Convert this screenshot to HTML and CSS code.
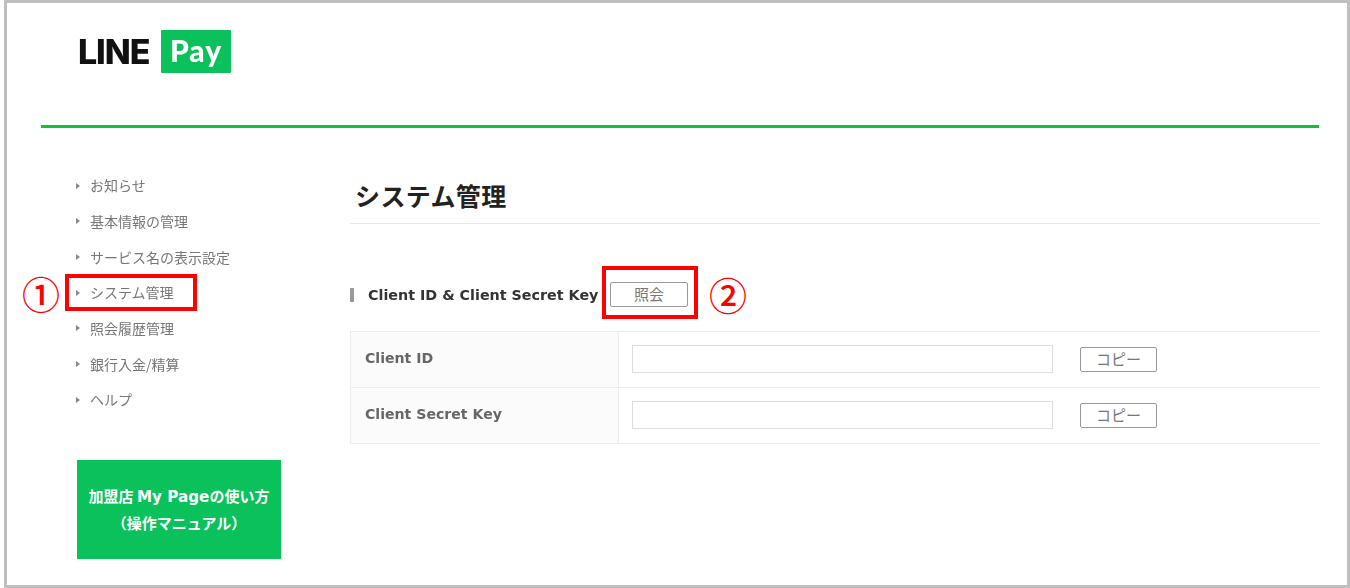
FILE: index.html
```html
<!DOCTYPE html>
<html lang="ja">
<head>
<meta charset="utf-8">
<title>LINE Pay</title>
<link rel="stylesheet" href="styles.css">
</head>
<body>
<div class="frame">
  <header class="header">
    <div class="logo"><span class="logo-line">LINE</span><span class="logo-pay">Pay</span></div>
  </header>
  <div class="rule"></div>
  <div class="main">
    <aside class="sidebar">
      <ul class="nav">
        <li class="nav-row"><a class="nav-item"><i class="arrow"></i><span class="nav-text">お知らせ</span></a></li>
        <li class="nav-row"><a class="nav-item"><i class="arrow"></i><span class="nav-text">基本情報の管理</span></a></li>
        <li class="nav-row"><a class="nav-item"><i class="arrow"></i><span class="nav-text">サービス名の表示設定</span></a></li>
        <li class="nav-row"><a class="nav-item active"><i class="arrow"></i><span class="nav-text">システム管理</span><span class="mark mark-one">①</span></a></li>
        <li class="nav-row"><a class="nav-item"><i class="arrow"></i><span class="nav-text">照会履歴管理</span></a></li>
        <li class="nav-row"><a class="nav-item"><i class="arrow"></i><span class="nav-text">銀行入金/精算</span></a></li>
        <li class="nav-row"><a class="nav-item"><i class="arrow"></i><span class="nav-text">ヘルプ</span></a></li>
      </ul>
      <div class="banner"><span>加盟店 <span class="banner-latin">My Page</span>の使い方</span><span>（操作マニュアル）</span></div>
    </aside>
    <main class="content">
      <h1 class="title">システム管理</h1>
      <div class="section">
        <i class="section-bar"></i>
        <h2 class="section-title">Client ID &amp; Client Secret Key</h2>
        <div class="query-wrap"><button class="btn query">照会</button><span class="mark mark-two">②</span></div>
      </div>
      <div class="table">
        <div class="row">
          <div class="label">Client ID</div>
          <div class="value"><input class="input" type="text"><button class="btn copy">コピー</button></div>
        </div>
        <div class="row">
          <div class="label">Client Secret Key</div>
          <div class="value"><input class="input" type="text"><button class="btn copy">コピー</button></div>
        </div>
      </div>
    </main>
  </div>
</div>
</body>
</html>
```
FILE: styles.css
```css
* { box-sizing: border-box; }
html, body { margin: 0; padding: 0; background: #fff; }
body { width: 1350px; height: 588px; overflow: hidden; padding-left: 4px; font-family: "Noto Sans CJK JP", "Noto Sans", sans-serif; color: #666; }
.frame { width: 1346px; height: 588px; border: 3px solid #bfbfbf; display: flex; flex-direction: column; }

.header { height: 122px; padding: 27px 0 0 71px; flex: none; }
.logo { display: flex; align-items: center; height: 43px; gap: 10px; filter: blur(0.4px); }
.logo-line { width: 73px; font: 800 34px/43px Inter, sans-serif; color: #111; letter-spacing: -1.1px; white-space: nowrap; }
.logo-pay { width: 70px; height: 43px; background: #0bc15b; border-radius: 1px; color: #fff; font: 900 30px/41px Lato, sans-serif; text-align: center; letter-spacing: 1px; }
.rule { height: 3px; margin: 0 28px 0 34px; background: #10c23a; flex: none; }

.main { display: flex; flex: 1; }
.sidebar { width: 343px; flex: none; padding-top: 40px; }
.nav { list-style: none; margin: 0; padding: 0 0 0 62px; }
.nav-row { height: 35.65px; display: flex; align-items: center; }
.nav-item { position: relative; display: flex; align-items: center; height: 29px; padding: 0 19px 0 7px; font-size: 14px; line-height: 29px; color: #777; white-space: nowrap; }
.nav-text { filter: blur(0.4px); }
.nav-item.active { outline: 4px solid #f00; }
.arrow { width: 0; height: 0; margin-right: 10px; border-left: 4px solid #888; border-top: 3px solid transparent; border-bottom: 3px solid transparent; }
.mark { position: absolute; color: #f00; font-size: 38px; line-height: 38px; font-weight: 500; }
.mark-one { left: -47px; top: -4px; }
.mark-two { left: 103px; top: 5px; }

.banner { display: flex; flex-direction: column; align-items: center; justify-content: center; gap: 4px; width: 204px; height: 99px; margin: 42.5px 0 0 70px; background: #0bc15b; color: #fff; font-weight: 700; font-size: 15px; line-height: 21px; white-space: nowrap; }
.banner-latin { font-family: "DejaVu Sans", sans-serif; font-size: 15.2px; }

.content { flex: none; width: 970px; }
.title { margin: 0; height: 96px; padding: 48px 0 0 5px; border-bottom: 1px solid #e8e8e8; font-size: 25px; line-height: 38px; font-weight: 700; color: #222; letter-spacing: 0.4px; }
.section { display: flex; align-items: center; height: 53px; margin-top: 42px; padding-top: 4px; }
.section-bar { width: 4px; height: 14px; background: #999; margin-right: 14px; flex: none; }
.section-title { margin: 0; font: 700 14.3px/20px "DejaVu Sans", sans-serif; color: #333; white-space: nowrap; width: 238px; filter: blur(0.3px); }
.query-wrap { position: relative; outline: 4px solid #f00; width: 88px; height: 45px; margin-top: -4px; padding: 4px 0 0 4px; display: flex; align-items: center; }
.btn { padding: 0 0 2px; background: #fff; border: 1px solid #999; border-radius: 2px; font-family: "Noto Sans CJK JP", sans-serif; font-size: 15px; line-height: 20px; color: #777; }
.query { width: 78px; height: 25px; }

.table { margin-top: 12px; border-top: 1px solid #ececec; border-left: 1px solid #ececec; }
.row { display: flex; height: 56px; border-bottom: 1px solid #ececec; }
.label { width: 268px; padding-left: 14px; background: #fbfbfb; border-right: 1px solid #ececec; font: 700 14.1px/53px "DejaVu Sans", sans-serif; color: #666; filter: blur(0.3px); }
.value { display: flex; align-items: center; padding: 0 0 2px 13px; gap: 27px; }
.input { width: 421px; height: 28px; border: 1px solid #ddd; background: #fff; padding: 0; }
.copy { width: 77px; height: 25px; margin-top: 2px; }
```
